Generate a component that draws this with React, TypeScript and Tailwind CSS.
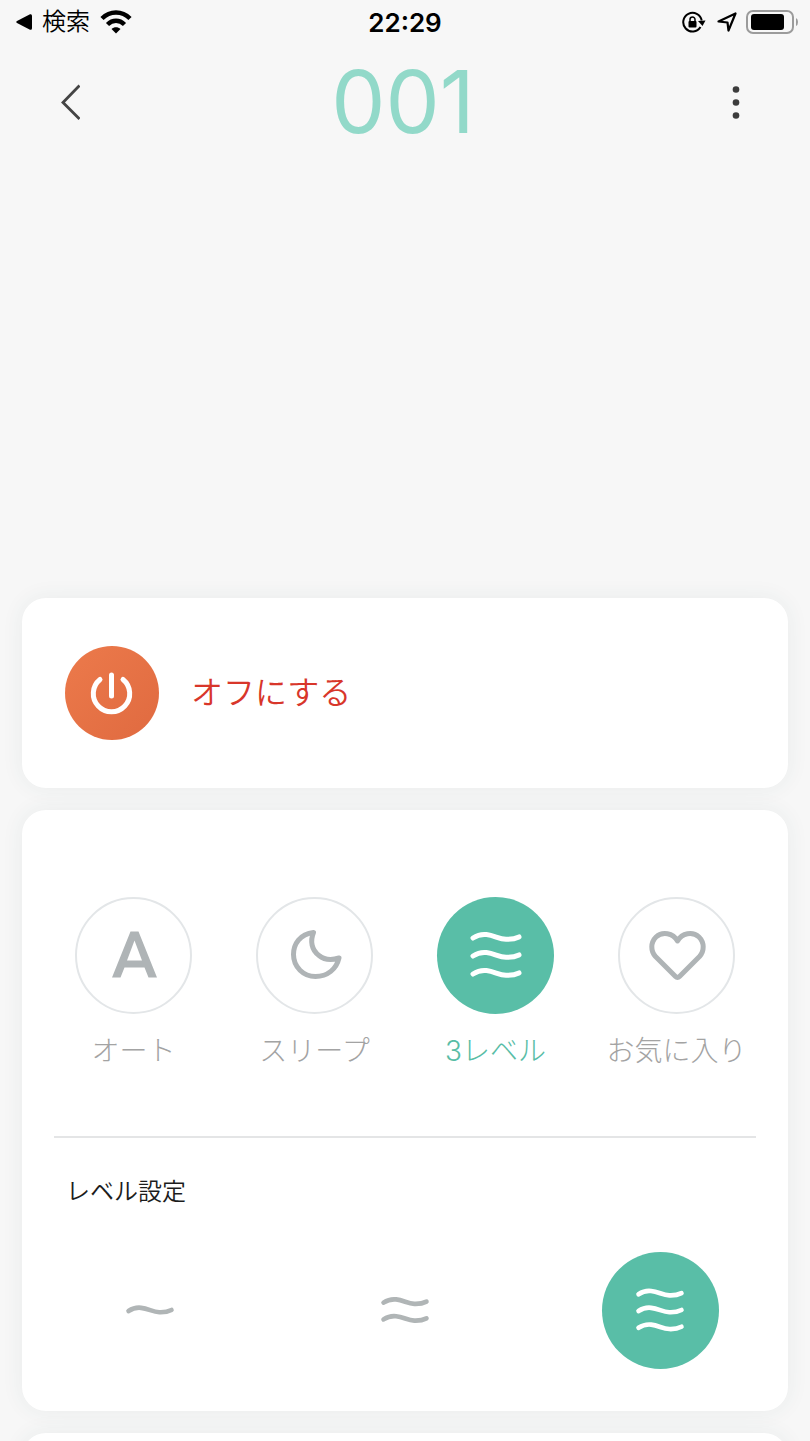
import * as React from "react";
import clsx from "clsx";

const WAVE = "c4 -2.6 8.5 -4 13.5 -3.4 c8 1 12.5 4.4 19.5 4.7 c5 .2 9 -.4 13 -2.4";

function Waves({ count, className }: { count: number; className: string }) {
  const first = 30 - (count - 1) * 9;
  return (
    <svg className={className} viewBox="0 0 60 60" fill="none" stroke="currentColor" strokeWidth={5} strokeLinecap="round" aria-hidden="true">
      {Array.from({ length: count }, (_, i) => (
        <path key={i} d={`M7 ${first + i * 18} ${WAVE}`} />
      ))}
    </svg>
  );
}

function AutoIcon() {
  return (
    <svg className="size-15" viewBox="0 0 60 60" fill="currentColor" fillRule="evenodd" aria-hidden="true">
      <path d="M26.500 5.500 H34.500 L53 51.500 H44.500 L40.500 41.500 H20.500 L16.500 51.500 H8 Z M30.500 14.500 L23 34.500 H38 Z" />
    </svg>
  );
}

function MoonIcon() {
  return (
    <svg className="size-15" viewBox="0 0 60 60" fill="none" stroke="currentColor" strokeWidth={5} strokeLinejoin="round" aria-hidden="true">
      <path d="M28.500 6.500 C15 8 8.500 18 8.500 28.500 C8.500 41 18.500 50.500 30.500 50.500 C42.500 50.500 51.500 43 54 32 C47.500 34 39.500 34 34 29.500 C26.500 24 25 15 28.500 6.500 Z" />
    </svg>
  );
}

function HeartIcon() {
  return (
    <svg className="size-15" viewBox="0 0 60 60" fill="none" stroke="currentColor" strokeWidth={5} strokeLinejoin="round" aria-hidden="true">
      <path d="M30.500 15 C26 7 15.500 5 9 11 C3.500 16.500 3.500 25 8.500 30.500 L28.500 50.500 C29.700 51.700 31.300 51.700 32.500 50.500 L52.500 30.500 C57.500 25 57.500 16.500 52 11 C45.500 5 35 7 30.500 15 Z" />
    </svg>
  );
}

const modes = [
  { label: "オート", icon: <AutoIcon />, active: false },
  { label: "スリープ", icon: <MoonIcon />, active: false },
  { label: "3レベル", icon: <Waves count={3} className="size-15" />, active: true },
  { label: "お気に入り", icon: <HeartIcon />, active: false },
];

const levels = [1, 2, 3];

function StatusBar() {
  return (
    <div className="grid h-11 grid-cols-3 items-center text-black">
      <div className="flex items-center pl-4">
        <svg className="h-4 w-4" viewBox="0 0 16 16" aria-hidden="true">
          <path d="M1 7 L14 .3 Q16 -.4 16 2 V14 Q16 16.400 14 15.700 L1 9 Q-.5 8 1 7 Z" />
        </svg>
        <span className="ml-2.5 text-2xl font-[350]">検索</span>
        <svg className="ml-2.5 h-6 w-8" viewBox="0 0 32 24" fill="none" stroke="currentColor" strokeWidth={4.500} aria-hidden="true">
          <path d="M2 8.500 C10 .5 22 .5 30 8.500" />
          <path d="M7.500 14.500 C12.500 9.600 19.500 9.600 24.500 14.500" />
          <path d="M16 23.500 L11.500 19 C14 16.600 18 16.600 20.500 19 Z" fill="currentColor" stroke="none" />
        </svg>
      </div>
      <div className="text-center text-[26px] font-semibold">22:29</div>
      <div className="flex items-center justify-end pr-3">
        <svg className="h-6 w-6" viewBox="0 0 24 24" fill="none" stroke="currentColor" strokeWidth={2} aria-hidden="true">
          <path d="M18.500 17 A9.300 9.300 0 1 1 19.700 10.500" />
          <path d="M16 11 L23.500 10.500 L20.500 16 Z" fill="currentColor" stroke="none" />
          <rect x="6.500" y="11" width="8" height="6.500" rx="1" fill="currentColor" stroke="none" />
          <path d="M8 12 V9.500 a2.500 2.500 0 0 1 5 0 V12" strokeWidth={1.500} />
        </svg>
        <svg className="ml-2.5 h-6 w-6" viewBox="0 0 24 24" fill="none" stroke="currentColor" strokeWidth={2.200} strokeLinejoin="round" aria-hidden="true">
          <path d="M2.500 11.500 L19.500 3.500 L12.500 20.500 L11.500 12.500 Z" />
        </svg>
        <svg className="ml-1.5 h-6 w-13" viewBox="0 0 52 24" aria-hidden="true">
          <rect x="1" y="1" width="46" height="22" rx="6" fill="none" stroke="#9b9b9b" strokeWidth={2} />
          <rect x="5" y="4" width="33" height="16" rx="3" />
          <path d="M50 8 Q52 9 52 12 Q52 15 50 16 Z" fill="#9b9b9b" />
        </svg>
      </div>
    </div>
  );
}

function Card({ className, children }: { className?: string; children?: React.ReactNode }) {
  return (
    <section className={clsx("rounded-3xl bg-white shadow-[0_0_22px_rgba(40,80,80,0.07)]", className)}>
      {children}
    </section>
  );
}

export default function App() {
  return (
    <main className="h-screen overflow-y-auto bg-[#f7f7f7] font-['Inter','Noto_Sans_CJK_JP',sans-serif] [scrollbar-width:none]" lang="ja">
      <StatusBar />

      <header className="grid grid-cols-[1fr_auto_1fr] items-center pr-[54px] pl-[50px]">
        <button type="button" aria-label="戻る" className="flex size-10 items-center justify-center text-[#444]">
          <svg className="h-9 w-5" viewBox="0 0 20 36" fill="none" stroke="currentColor" strokeWidth={2.800} aria-hidden="true">
            <path d="M19.500 1.500 L3 18.500 L19.500 35" />
          </svg>
        </button>
        <h1 className="text-[86px] leading-[116px] font-normal text-[#92d9c9]">001</h1>
        <button type="button" aria-label="メニュー" className="flex size-10 items-center justify-center justify-self-end text-[#3c3c3c]">
          <svg className="h-9 w-2" viewBox="0 0 8 36" fill="currentColor" aria-hidden="true">
            <circle cx="4" cy="5.500" r="3.300" />
            <circle cx="4" cy="18.500" r="3.300" />
            <circle cx="4" cy="31.500" r="3.300" />
          </svg>
        </button>
      </header>

      <div className="mt-[438px] flex flex-col gap-[22px] px-[22px]">
        <Card className="px-[43px] py-12">
          <button type="button" className="flex items-center gap-8 text-[32px] font-[350] text-[#d8362a]">
            <span className="flex size-[94px] items-center justify-center rounded-full bg-linear-to-br from-[#ec7a4b] to-[#e06a40] text-white">
              <svg className="size-12" viewBox="0 0 48 48" fill="none" stroke="currentColor" strokeWidth={5} strokeLinecap="round" aria-hidden="true">
                <path d="M23.500 6 V27" />
                <path d="M12 10.500 A18.200 18.200 0 1 0 35 10.500" />
              </svg>
            </span>
            オフにする
          </button>
        </Card>

        <Card>
          <div className="grid grid-cols-4 px-[21px] pt-[87px]">
            {modes.map((mode) => (
              <button
                key={mode.label}
                type="button"
                aria-pressed={mode.active}
                className={clsx("flex flex-col items-center gap-[17px] text-[28px] font-light", mode.active ? "text-[#58bda6]" : "text-[#a3a3a3]")}
              >
                <span
                  className={clsx(
                    "flex size-[117px] items-center justify-center rounded-full",
                    mode.active ? "bg-[#59bea7] text-white" : "border-2 border-[#e3e6e8] text-[#afb4b6]"
                  )}
                >
                  {mode.icon}
                </span>
                <span className="leading-10">{mode.label}</span>
              </button>
            ))}
          </div>

          <hr className="mx-8 mt-[65px] border-t-2 border-[#e4e5e6]" />

          <h2 className="mt-9 px-11 text-2xl leading-9 font-[350] text-[#1c1c1c]">レベル設定</h2>

          <div className="mt-[42px] grid grid-cols-3 justify-items-center pb-[42px]">
            {levels.map((level) => (
              <button
                key={level}
                type="button"
                aria-label={`レベル${level}`}
                aria-pressed={level === 3}
                className={clsx(
                  "flex size-[117px] items-center justify-center rounded-full",
                  level === 3 ? "bg-[#59bea7] text-white" : "text-[#b0b5b6]"
                )}
              >
                <Waves count={level} className="size-14" />
              </button>
            ))}
          </div>
        </Card>

        <Card className="h-48" />
      </div>
    </main>
  );
}
